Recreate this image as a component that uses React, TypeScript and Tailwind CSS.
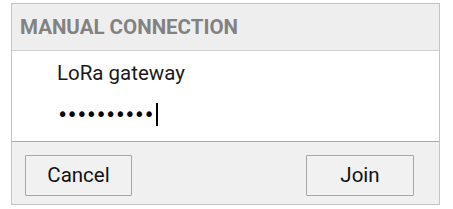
import React from 'react';

const App: React.FC = () => {
    return (
        <div className="w-[453px] h-[209px] bg-white pt-[3px] pl-[11px]" style={{ fontFamily: 'Roboto, sans-serif' }}>
            <div className="w-[429px] border border-[#c4c4c4] flex flex-col">
                <div className="h-[47px] bg-[#eeeeee] border-b border-[#cfcfcf] flex items-center pl-[8px]">
                    <span className="text-[20.5px] font-bold text-[#828282]">MANUAL CONNECTION</span>
                </div>
                <div className="h-[90px] bg-white flex flex-col pl-[45px]">
                    <div className="h-[43px] flex items-end pb-[5px]">
                        <span className="text-[20.5px] text-[#1a1a1a]">LoRa gateway</span>
                    </div>
                    <div className="flex items-center h-[30px] mt-[5px]">
                        <span className="text-[19px] text-black tracking-[-1.6px] leading-none" style={{ fontFamily: '"DejaVu Sans", sans-serif' }}>••••••••••</span>
                        <span className="w-[2px] h-[23px] bg-black ml-[3px]" />
                    </div>
                </div>
                <div className="h-[63px] bg-[#f0f0f0] border-t border-[#a8a8a8] flex items-center justify-between pl-[13px] pr-[25px] pt-[4px]">
                    <button className="w-[107px] h-[41px] border border-[#a6a6a6] bg-[#f1f1f1] text-[20.5px] text-[#111] rounded-[1px]">Cancel</button>
                    <button className="w-[108px] h-[41px] border border-[#a6a6a6] bg-[#f1f1f1] text-[20.5px] text-[#111] rounded-[1px]">Join</button>
                </div>
            </div>
        </div>
    );
};

export default App;
